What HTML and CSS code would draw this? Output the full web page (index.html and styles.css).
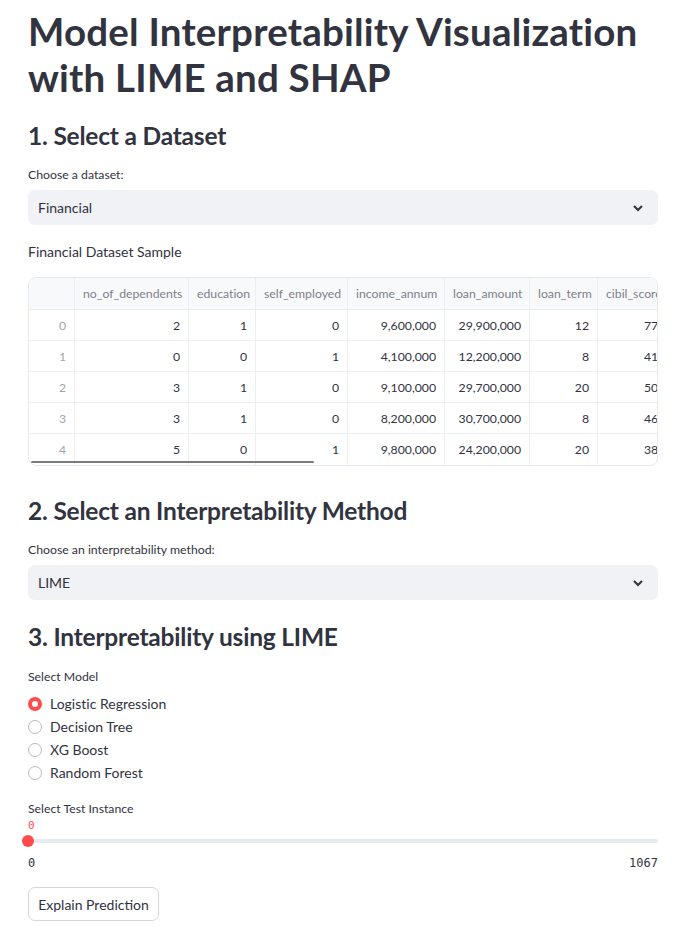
FILE: index.html
```html
<!DOCTYPE html>
<html>
<head>
<meta charset="utf-8">
<link rel="stylesheet" href="styles.css">
</head>
<body>
<main class="main">
  <h1 class="title">Model Interpretability Visualization with LIME and SHAP</h1>

  <h2 class="sub sub-first">1. Select a Dataset</h2>
  <div class="label">Choose a dataset:</div>
  <div class="select">
    <span>Financial</span>
    <svg class="chev" width="12" height="8" viewBox="0 0 12 8"><path d="M2 2 L6 6 L10 2" fill="none" stroke="#31333f" stroke-width="2"/></svg>
  </div>

  <p class="caption">Financial Dataset Sample</p>

  <div class="table-wrap">
    <div class="grid">
      <div class="row head">
        <div class="c c0"></div>
        <div class="c c1">no_of_dependents</div>
        <div class="c c2">education</div>
        <div class="c c3">self_employed</div>
        <div class="c c4">income_annum</div>
        <div class="c c5">loan_amount</div>
        <div class="c c6">loan_term</div>
        <div class="c c7">cibil_score</div>
      </div>
      <div class="row">
        <div class="c c0 idx">0</div><div class="c c1">2</div><div class="c c2">1</div><div class="c c3">0</div><div class="c c4">9,600,000</div><div class="c c5">29,900,000</div><div class="c c6">12</div><div class="c c7">778</div>
      </div>
      <div class="row">
        <div class="c c0 idx">1</div><div class="c c1">0</div><div class="c c2">0</div><div class="c c3">1</div><div class="c c4">4,100,000</div><div class="c c5">12,200,000</div><div class="c c6">8</div><div class="c c7">417</div>
      </div>
      <div class="row">
        <div class="c c0 idx">2</div><div class="c c1">3</div><div class="c c2">1</div><div class="c c3">0</div><div class="c c4">9,100,000</div><div class="c c5">29,700,000</div><div class="c c6">20</div><div class="c c7">506</div>
      </div>
      <div class="row">
        <div class="c c0 idx">3</div><div class="c c1">3</div><div class="c c2">1</div><div class="c c3">0</div><div class="c c4">8,200,000</div><div class="c c5">30,700,000</div><div class="c c6">8</div><div class="c c7">467</div>
      </div>
      <div class="row last">
        <div class="c c0 idx">4</div><div class="c c1">5</div><div class="c c2">0</div><div class="c c3">1</div><div class="c c4">9,800,000</div><div class="c c5">24,200,000</div><div class="c c6">20</div><div class="c c7">382</div>
      </div>
    </div>
    <div class="scroll-thumb"></div>
  </div>

  <h2 class="sub sub-second">2. Select an Interpretability Method</h2>
  <div class="label">Choose an interpretability method:</div>
  <div class="select">
    <span>LIME</span>
    <svg class="chev" width="12" height="8" viewBox="0 0 12 8"><path d="M2 2 L6 6 L10 2" fill="none" stroke="#31333f" stroke-width="2"/></svg>
  </div>

  <h2 class="sub sub-third">3. Interpretability using LIME</h2>
  <div class="label label-model">Select Model</div>
  <div class="radios">
    <div class="radio"><span class="dot on"></span><span>Logistic Regression</span></div>
    <div class="radio"><span class="dot"></span><span>Decision Tree</span></div>
    <div class="radio"><span class="dot"></span><span>XG Boost</span></div>
    <div class="radio"><span class="dot"></span><span>Random Forest</span></div>
  </div>

  <div class="label label-slider">Select Test Instance</div>
  <div class="slider">
    <div class="slider-val">0</div>
    <div class="track"><span class="thumb"></span></div>
    <div class="ticks"><span>0</span><span>1067</span></div>
  </div>

  <button class="btn">Explain Prediction</button>
</main>
</body>
</html>
```

FILE: styles.css
```css
* { box-sizing: border-box; }
html, body { margin: 0; padding: 0; background: #ffffff; }
body {
  font-family: Lato, "Noto Sans", "Liberation Sans", sans-serif;
  font-variant-ligatures: none;
  color: #31333f;
}
.main {
  display: flex;
  flex-direction: column;
  align-items: stretch;
  padding: 8px 31px 0 28px;
  width: 689px;
}
.title {
  margin: 0;
  font-size: 38.5px;
  line-height: 46px;
  font-weight: 700;
  letter-spacing: 0.2px;
}
.sub {
  margin: 0;
  font-size: 24.5px;
  line-height: 30px;
  font-weight: 700;
  letter-spacing: -0.2px;
}
.sub-first { margin-top: 21px; }
.sub-second { margin-top: 30px; }
.sub-third { margin-top: 22px; }
.label {
  font-size: 12.25px;
  line-height: 18px;
  margin-top: 15px;
}
.label-model { margin-top: 16px; }
.label-slider { margin-top: 16px; }
.select {
  margin-top: 6px;
  height: 35px;
  background: #f0f2f6;
  border-radius: 7px;
  display: flex;
  align-items: center;
  justify-content: space-between;
  padding: 0 14px 0 10px;
  font-size: 14px;
}
.chev { display: block; }
.caption {
  margin: 16px 0 0;
  font-size: 14px;
  line-height: 21px;
}
.table-wrap {
  margin-top: 15px;
  position: relative;
  border: 1px solid #e6e9ef;
  border-radius: 8px;
  overflow: hidden;
  height: 189px;
}
.grid { display: flex; flex-direction: column; }
.row {
  display: flex;
  height: 31px;
  border-bottom: 1px solid #eceef2;
  font-size: 12.25px;
}
.row.head {
  height: 32px;
  background: #f8f9fb;
  color: #7d7f8a;
}
.row.last { border-bottom: none; }
.c {
  flex: none;
  display: flex;
  align-items: center;
  justify-content: flex-end;
  padding: 0 8px;
  border-right: 1px solid #eceef2;
  white-space: nowrap;
  overflow: hidden;
}
.row.head .c { justify-content: flex-start; }
.c0 { width: 46px; }
.c1 { width: 114px; }
.c2 { width: 67px; }
.c3 { width: 92px; }
.c4 { width: 97px; }
.c5 { width: 85px; }
.c6 { width: 68px; }
.c7 { width: 80px; border-right: none; justify-content: flex-start; }
.row:not(.head) .c7 { justify-content: flex-start; padding-left: 46px; }
.idx { color: #a3a5ad; }
.scroll-thumb {
  position: absolute;
  left: 2px;
  top: 183px;
  width: 283px;
  height: 2px;
  background: #7c7c7c;
  border-radius: 1px;
}
.radios {
  margin-top: 6px;
  display: flex;
  flex-direction: column;
}
.radio {
  display: flex;
  align-items: center;
  height: 23px;
  font-size: 14px;
  gap: 8px;
}
.dot {
  width: 14px;
  height: 14px;
  border-radius: 50%;
  border: 1px solid #b9bac0;
  background: #fff;
  flex: none;
}
.dot.on {
  border: 4.5px solid #ff4b4b;
  background: #fff;
}
.slider {
  display: flex;
  flex-direction: column;
}
.slider-val {
  font-family: "DejaVu Sans Mono", "Liberation Mono", monospace;
  font-size: 11px;
  line-height: 14px;
  color: #ff4b4b;
  margin-top: 1px;
}
.track {
  position: relative;
  margin-top: 6px;
  height: 4px;
  background: #e6eaf1;
  border-radius: 2px;
}
.thumb {
  position: absolute;
  left: -6px;
  top: -4px;
  width: 12px;
  height: 12px;
  border-radius: 50%;
  background: #ff4b4b;
}
.ticks {
  display: flex;
  justify-content: space-between;
  margin-top: 13px;
  font-family: "DejaVu Sans Mono", "Liberation Mono", monospace;
  font-size: 12px;
  line-height: 14px;
}
.btn {
  margin-top: 17px;
  align-self: flex-start;
  width: 131px;
  height: 34px;
  background: #fff;
  border: 1px solid #d5d6da;
  border-radius: 7px;
  font-family: Lato, "Noto Sans", "Liberation Sans", sans-serif;
  font-size: 14px;
  color: #31333f;
  padding: 0;
}
```
